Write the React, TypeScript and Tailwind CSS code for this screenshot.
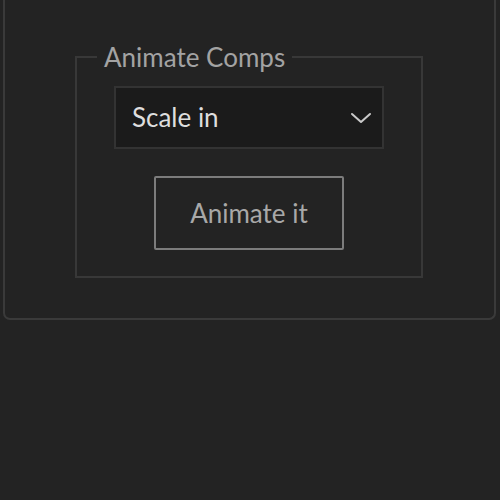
export default function App() {
  return (
    <div className="w-full h-[500px] bg-[#232323] font-['Lato',sans-serif] overflow-hidden">
      {/* panel (top edge is off screen) */}
      <div className="ml-[3px] w-[493px] h-[320px] border-2 border-t-0 border-[#3a3a3a] rounded-b-[7px] pt-[37px]">
        <fieldset className="ml-[70px] w-[348px] h-[241px] border-2 border-[#383838] flex flex-col items-center">
          <legend className="ml-[20px] px-[7px] text-[26px] leading-[40px] text-[#a3a3a3]">
            Animate Comps
          </legend>
          <div className="mt-[9px] w-[270px] h-[63px] bg-[#1b1b1b] border-2 border-[#333333] flex items-center justify-between pl-[16px] pr-[9px]">
            <span className="text-[26px] text-[#dedede]">Scale in</span>
            <svg width="22" height="12" viewBox="0 0 22 12" className="mr-[1px]">
              <polyline points="2,2 11,10 20,2" fill="none" stroke="#cacaca" strokeWidth="2" strokeLinecap="round" strokeLinejoin="round" />
            </svg>
          </div>
          <button className="mt-[27px] w-[190px] h-[74px] border-2 border-[#7c7c7c] rounded-[2px] bg-[#232323] text-[26px] text-[#a8a8a8]">
            Animate it
          </button>
        </fieldset>
      </div>
    </div>
  );
}
